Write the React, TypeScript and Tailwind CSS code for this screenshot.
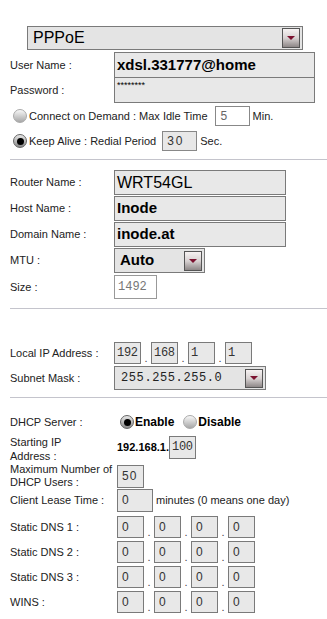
import React from "react";

const Arrow = ({ h = "h-[20px]" }: { h?: string }) => (
  <div
    className={`w-[18px] ${h} border border-[#555] bg-gradient-to-b from-[#f6f2f2] via-[#d8d2d2] to-[#8e8888] flex items-center justify-center`}
  >
    <div className="w-0 h-0 border-l-[4px] border-r-[4px] border-t-[4px] border-l-transparent border-r-transparent border-t-[#7c1230]" />
  </div>
);

const Radio = ({ on }: { on?: boolean }) => (
  <div
    className={`w-[14px] h-[14px] rounded-full border flex items-center justify-center shrink-0 ${
      on
        ? "border-[#666] bg-gradient-to-b from-[#e8e8e8] to-[#8a8a8a]"
        : "border-[#aaa] bg-gradient-to-b from-[#f8f8f8] to-[#a8a8a8]"
    }`}
  >
    {on && <div className="w-[7px] h-[7px] rounded-full bg-black" />}
  </div>
);

const Box = ({ w, h = "h-[22px]", children, mono }: { w: string; h?: string; children?: React.ReactNode; mono?: boolean }) => (
  <div
    className={`${w} ${h} border border-[#7a7a7a] bg-[#e8e8e8] flex items-start pt-[2px] text-[#333] leading-[16px] ${
      mono ? "font-['Liberation_Mono',monospace] text-[12px] pl-[2px] tracking-[-0.3px]" : "text-[12px] pl-[4px]"
    }`}
  >
    {children}
  </div>
);

const Dot = () => <div className="w-[10px] self-end text-center text-[11px] leading-[12px] text-[#444]">.</div>;

const Quad = ({ vals, mono }: { vals: string[]; mono?: boolean }) => (
  <div className="flex">
    {vals.map((v, i) => (
      <React.Fragment key={i}>
        {i > 0 && <Dot />}
        <Box w="w-[27px]" mono={mono}>
          {v}
        </Box>
      </React.Fragment>
    ))}
  </div>
);

const Divider = ({ mt }: { mt: string }) => <div className={`${mt} ml-[10px] h-px bg-[#c4c4cc]`} />;

export default function App() {
  return (
    <div className="w-[327px] h-[619px] overflow-hidden bg-white font-['Liberation_Sans',Arial,sans-serif] text-[11px] text-[#222]">
      <div className="pt-[26px]">
        {/* connection type */}
        <div className="ml-[27px] w-[276px] h-[24px] border border-[#7a7a7a] bg-[#e4e4e4] flex items-center justify-between pl-[5px] pr-[2px]">
          <span className="text-[16px] text-black">PPPoE</span>
          <Arrow />
        </div>

        <div className="mt-[2px] flex items-center h-[26px] pl-[10px]">
          <div className="w-[104px]">User Name :</div>
          <div className="w-[201px] h-[26px] border border-[#7a7a7a] bg-[#e8e8e8] pl-[2px] flex items-center text-[15px] font-bold text-black">
            xdsl.331777@home
          </div>
        </div>
        <div className="-mt-px flex items-center h-[26px] pl-[10px]">
          <div className="w-[104px]">Password :</div>
          <div className="w-[201px] h-[26px] border border-[#7a7a7a] bg-[#e8e8e8] pl-[2px] pt-[2px] text-[9px] leading-[10px] text-black">
            ********
          </div>
        </div>

        <div className="mt-[3px] flex items-center h-[20px] pl-[13px]">
          <Radio />
          <span className="ml-[2px]">Connect on Demand : Max Idle Time</span>
          <div className="ml-[7px] w-[35px] h-[20px] border border-[#888] bg-white pl-[5px] text-[12px] leading-[18px] text-[#666]">5</div>
          <span className="ml-[3px]">Min.</span>
        </div>
        <div className="mt-[5px] flex items-center h-[20px] pl-[13px]">
          <Radio on />
          <span className="ml-[2px]">Keep Alive : Redial Period</span>
          <div className="ml-[6px] w-[35px] h-[20px] border border-[#888] bg-[#e8e8e8] pl-[4px] text-[12px] leading-[18px] tracking-[2px] text-[#333]">30</div>
          <span className="ml-[3px]">Sec.</span>
        </div>

        <Divider mt="mt-[8px]" />

        {/* router settings */}
        <div className="mt-[10px] flex flex-col gap-px">
          {[
            ["Router Name :", "WRT54GL", "font-normal text-[16px]"],
            ["Host Name :", "Inode", "font-bold text-[15px]"],
            ["Domain Name :", "inode.at", "font-bold text-[15px]"],
          ].map(([l, v, c]) => (
            <div key={l} className="flex items-center h-[25px] pl-[10px]">
              <div className="w-[104px]">{l}</div>
              <div className={`w-[172px] h-[25px] border border-[#7a7a7a] bg-[#e8e8e8] pl-[2px] flex items-center text-black ${c}`}>{v}</div>
            </div>
          ))}
          <div className="flex items-center h-[25px] pl-[10px]">
            <div className="w-[104px]">MTU :</div>
            <div className="w-[91px] h-[25px] border border-[#7a7a7a] bg-[#e4e4e4] flex items-center justify-between pl-[5px] pr-[2px]">
              <span className="text-[15px] font-bold text-black">Auto</span>
              <Arrow />
            </div>
          </div>
        </div>
        <div className="mt-[2px] flex items-center h-[24px] pl-[10px]">
          <div className="w-[104px]">Size :</div>
          <div className="w-[43px] h-[24px] border border-[#999] bg-white pl-[3px] font-['Liberation_Mono',monospace] text-[12px] leading-[22px] text-[#777]">1492</div>
        </div>

        <Divider mt="mt-[9px]" />

        {/* LAN */}
        <div className="mt-[33px] flex items-center h-[22px] pl-[10px]">
          <div className="w-[104px]">Local IP Address :</div>
          <Quad vals={["192", "168", "1", "1"]} mono />
        </div>
        <div className="mt-[2px] flex items-center h-[24px] pl-[10px]">
          <div className="w-[104px]">Subnet Mask :</div>
          <div className="w-[152px] h-[24px] border border-[#7a7a7a] bg-[#e4e4e4] flex items-center justify-between pl-[6px] pr-[2px]">
            <span className="font-['Liberation_Mono',monospace] text-[12px] tracking-[0.6px] text-[#222]">255.255.255.0</span>
            <Arrow h="h-[19px]" />
          </div>
        </div>

        <Divider mt="mt-[7px]" />

        {/* DHCP */}
        <div className="mt-[14px] flex items-center h-[20px] pl-[10px]">
          <div className="w-[110px]">DHCP Server :</div>
          <Radio on />
          <span className="ml-[1px] font-bold text-[12px] text-black">Enable</span>
          <div className="ml-[9px]">
            <Radio />
          </div>
          <span className="ml-[1px] font-bold text-[12px] text-black">Disable</span>
        </div>
        <div className="mt-[3px] flex items-center h-[24px] pl-[10px]">
          <div className="w-[107px] leading-[14px] pt-[4px]">
            Starting IP
            <br />
            Address :
          </div>
          <span className="font-bold text-[11px] text-black">192.168.1.</span>
          <Box w="w-[27px]" h="h-[23px]" mono>
            100
          </Box>
        </div>
        <div className="mt-[5px] flex items-center h-[24px] pl-[10px]">
          <div className="w-[107px] leading-[13px]">
            Maximum Number of
            <br />
            DHCP Users :
          </div>
          <Box w="w-[27px]" h="h-[23px]">
            <span className="tracking-[1px]">50</span>
          </Box>
        </div>
        <div className="mt-px flex items-center h-[23px] pl-[10px]">
          <div className="w-[107px]">Client Lease Time :</div>
          <Box w="w-[36px]" h="h-[23px]">
            0
          </Box>
          <span className="ml-[3px]">minutes (0 means one day)</span>
        </div>
        <div className="mt-[4px] flex flex-col gap-[3px]">
          {["Static DNS 1 :", "Static DNS 2 :", "Static DNS 3 :", "WINS :"].map((l) => (
            <div key={l} className="flex items-center h-[22px] pl-[10px]">
              <div className="w-[107px]">{l}</div>
              <Quad vals={["0", "0", "0", "0"]} />
            </div>
          ))}
        </div>
      </div>
    </div>
  );
}
